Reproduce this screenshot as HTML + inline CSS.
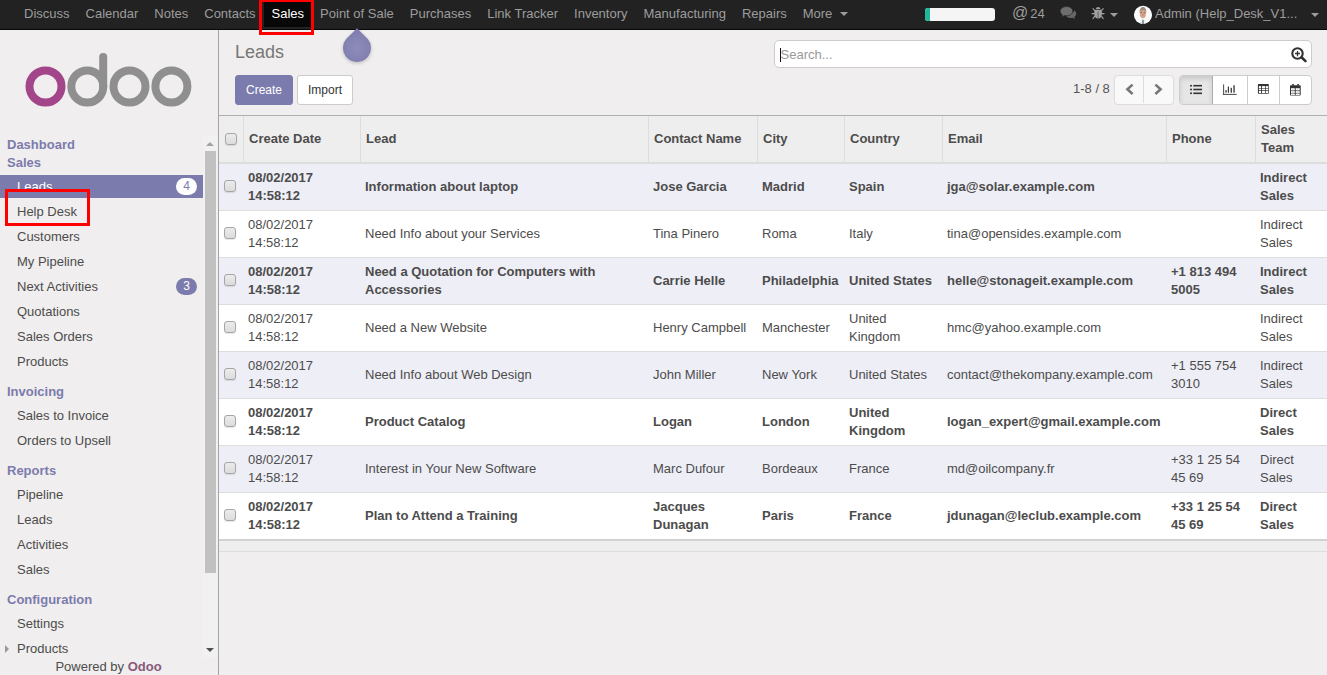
<!DOCTYPE html>
<html><head><meta charset="utf-8">
<style>
*{box-sizing:border-box;}
html,body{margin:0;padding:0;width:1327px;height:675px;overflow:hidden;}
body{font-family:"Liberation Sans",sans-serif;font-size:13px;color:#4c4c4c;background:#f0eeee;position:relative;}
#nav{position:absolute;left:0;top:0;width:1327px;height:30px;background:#222;border-bottom:1px solid #080808;}
#nav ul{list-style:none;margin:0;padding:0;position:absolute;left:16px;top:0;display:flex;}
#nav ul li a{display:block;padding:0 8px;height:29px;line-height:27px;color:#9d9d9d;text-decoration:none;white-space:nowrap;}
#nav ul li.active a{color:#fff;background:#080808;height:27px;}
.caret{display:inline-block;width:0;height:0;border-top:4px solid;border-left:4px solid transparent;border-right:4px solid transparent;vertical-align:middle;margin-left:4px;position:relative;top:-1px;}
.abs{position:absolute;}
#sidebar{position:absolute;left:0;top:30px;width:219px;height:645px;background:#f0eeee;border-right:1px solid #a3a3a8;}
#menu{position:absolute;left:0;top:0;width:203px;}
#menu .sec{color:#7c7bad;font-weight:bold;padding-left:7px;line-height:18px;height:29px;padding-top:8.5px;}
#menu .sec.first{height:auto;padding-top:0;}
#menu .it{height:25px;line-height:25px;padding-left:17px;position:relative;white-space:nowrap;}
#menu .it.active{color:#fff;}
#menu .it.active:before{content:"";position:absolute;left:0;right:0;top:1px;bottom:1px;background:#7c7bad;z-index:0;}
#menu .it span{position:relative;}
#menu .it span.badge{position:absolute;}
.badge{position:absolute;left:176px;top:4px;width:21px;height:17px;border-radius:9px;background:#7c7bad;color:#fff;font-size:12px;line-height:17px;text-align:center;}
.it.active .badge{background:#fff;color:#7c7bad;}
#cp{position:absolute;left:219px;top:30px;width:1108px;height:86px;border-bottom:1px solid #b0b0b0;}
.btn{position:absolute;height:30px;line-height:28px;font-size:12px;border:1px solid #ccc;border-radius:3px;text-align:center;background:#fff;color:#333;}
.btn-primary{background:#7c7bad;border-color:#7c7bad;color:#fff;}
#list{position:absolute;left:219px;top:116px;}
table{border-collapse:collapse;table-layout:fixed;width:1108px;}
th{background:#eee;font-weight:bold;text-align:left;vertical-align:middle;padding:5px 5px 5px 5.5px;line-height:18px;height:46px;border-left:1px solid #ddd;border-bottom:2px solid #ddd;}
th:first-child{border-left:0;}
th .cb{margin-left:0;top:-0.5px;}
td{padding:5px 5px 5px 5px;line-height:18px;height:47px;vertical-align:middle;border-top:1px solid #ddd;}
tbody tr:first-child td{border-top:0;height:46px;}
tbody tr:nth-child(odd){background:#eeeef6;}
tbody tr:nth-child(even){background:#fff;}
tr.b td{font-weight:bold;}
.cb{display:block;width:12px;height:12px;border:1px solid #a6a6a6;border-radius:3px;background:linear-gradient(#ececec,#dcdcdc);margin-left:0;position:relative;top:-1px;box-shadow:0 1px 1px rgba(0,0,0,.1);}
tfoot td{height:11px;padding:0;background:#eee;border-top:2px solid #d2d2d2;border-bottom:1px solid #ddd;}
.redbox{position:absolute;border:3px solid #f00;}
</style></head><body>
<div id="nav">
  <ul>
    <li><a>Discuss</a></li>
    <li><a>Calendar</a></li>
    <li><a>Notes</a></li>
    <li><a>Contacts</a></li>
    <li class="active"><a>Sales</a></li>
    <li><a>Point of Sale</a></li>
    <li><a>Purchases</a></li>
    <li><a>Link Tracker</a></li>
    <li><a>Inventory</a></li>
    <li><a>Manufacturing</a></li>
    <li><a>Repairs</a></li>
    <li><a>More <span class="caret"></span></a></li>
  </ul>
  <!-- right side -->
  <div class="abs" style="left:925px;top:8px;width:70px;height:13px;border-radius:3px;background:#f5f5f5;overflow:hidden;"><div style="width:5px;height:13px;background:#21b799;"></div></div>
  <div class="abs" style="left:1012px;top:-1px;height:29px;line-height:27px;color:#9d9d9d;font-size:16px;">@</div><div class="abs" style="left:1030.2px;top:0;height:29px;line-height:27px;color:#9d9d9d;">24</div>
  <svg class="abs" style="left:1058px;top:4px" width="20" height="17" viewBox="1058 4 20 17">
    <path d="M1068.6 13.6 C1071.2 13.6 1073.6 12.4 1074.6 10.6 C1075.6 11.4 1076.2 12.5 1076.2 13.7 C1076.2 15 1075.5 16.1 1074.4 16.9 L1075 19 L1072.6 17.8 C1071.9 18 1071.2 18.1 1070.5 18.1 C1068.6 18.1 1067 17.3 1066.2 16.1 C1067 16 1067.8 15.8 1068.6 13.6 Z" fill="#666"/>
    <path d="M1066.5 6.6 C1070 6.6 1072.8 8.6 1072.8 11.2 C1072.8 13.8 1070 15.8 1066.5 15.8 C1065.9 15.8 1065.3 15.7 1064.7 15.6 L1061.6 17 L1062.4 14.8 C1061 14 1060.2 12.7 1060.2 11.2 C1060.2 8.6 1063 6.6 1066.5 6.6 Z" fill="#6e6e6e" stroke="#222" stroke-width="0.6"/>
  </svg>
  <svg class="abs" style="left:1091px;top:6px" width="14" height="14" viewBox="0 0 14 14">
    <path d="M4.9 3.1 C4.9 1.8 5.9 1 7.1 1 C8.3 1 9.3 1.8 9.3 3.1 Z" fill="#a0a0a0"/>
    <path d="M3.8 3.8 L10.4 3.8 C10.8 4.6 11 5.8 11 7.6 C11 10.6 9.4 12.6 7.1 12.6 C4.8 12.6 3.2 10.6 3.2 7.6 C3.2 5.8 3.4 4.6 3.8 3.8 Z" fill="#a0a0a0"/>
    <rect x="6.5" y="5.6" width="1.2" height="6.2" fill="#6a6a6a"/>
    <path d="M3.7 4.6 L2 2.6 M10.5 4.6 L12.2 2.6 M3.2 7.6 L1.1 7.6 M11 7.6 L13.1 7.6 M3.6 10.4 L2 12.6 M10.6 10.4 L12.2 12.6" stroke="#a0a0a0" stroke-width="1.1" stroke-linecap="round"/>
  </svg>
  <div class="abs" style="left:1110px;top:13px;width:0;height:0;border-top:4.5px solid #9d9d9d;border-left:4px solid transparent;border-right:4px solid transparent;"></div>
  <svg class="abs" style="left:1133px;top:5px" width="20" height="20" viewBox="0 0 20 20">
    <defs><clipPath id="av"><circle cx="10" cy="9.85" r="9.1"/></clipPath></defs>
    <circle cx="10" cy="9.85" r="9.1" fill="#fbfbfb"/>
    <g clip-path="url(#av)">
      <path d="M6.5 19.5 L8.2 14.6 L11.8 14.6 L13.5 19.5 Z" fill="#eceff3"/>
      <ellipse cx="9.9" cy="8.8" rx="3.1" ry="4.4" fill="#d4a48c"/>
      <path d="M7.6 7.6 H9 M10.8 7.6 H12.2" stroke="#7a5648" stroke-width="0.9"/>
      <path d="M9.9 9 V11" stroke="#b98470" stroke-width="0.8"/>
      <path d="M6.6 8.4 C6.3 4.4 7.8 2 10 2 C12.2 2 13.6 4.4 13.3 8.4 C12.9 6.4 12.2 5 10 4.9 C7.8 5 7 6.4 6.6 8.4 Z" fill="#9b8b7c"/>
      <path d="M9.4 14.8 L10.6 14.8 L10.9 19 L9.1 19 Z" fill="#6f7787"/>
    </g>
  </svg>
  <div class="abs" style="left:1155px;top:0;height:29px;line-height:27px;color:#9d9d9d;white-space:nowrap;">Admin (Help_Desk_V1...</div>
  <div class="abs" style="left:1311px;top:13px;width:0;height:0;border-top:4.5px solid #9d9d9d;border-left:4px solid transparent;border-right:4px solid transparent;"></div>
</div>

<div id="sidebar">
  <svg class="abs" style="left:0;top:0" width="218" height="90" viewBox="0 30 218 90">
    <circle cx="45.5" cy="86.5" r="16" fill="none" stroke="#a24689" stroke-width="8"/>
    <circle cx="87.3" cy="86.5" r="16" fill="none" stroke="#8f8f8f" stroke-width="8"/>
    <line x1="103.2" y1="57" x2="103.2" y2="87" stroke="#8f8f8f" stroke-width="8" stroke-linecap="round"/>
    <circle cx="129.5" cy="86.5" r="16" fill="none" stroke="#8f8f8f" stroke-width="8"/>
    <circle cx="171.4" cy="86.5" r="16" fill="none" stroke="#8f8f8f" stroke-width="8"/>
  </svg>
  <div id="menu" style="top:105.5px">
    <div class="sec first">Dashboard</div>
    <div class="sec first" style="height:20.5px">Sales</div>
    <div class="it active"><span>Leads</span><span class="badge">4</span></div>
    <div class="it"><span>Help Desk</span></div>
    <div class="it"><span>Customers</span></div>
    <div class="it"><span>My Pipeline</span></div>
    <div class="it"><span>Next Activities</span><span class="badge">3</span></div>
    <div class="it"><span>Quotations</span></div>
    <div class="it"><span>Sales Orders</span></div>
    <div class="it"><span>Products</span></div>
    <div class="sec">Invoicing</div>
    <div class="it"><span>Sales to Invoice</span></div>
    <div class="it"><span>Orders to Upsell</span></div>
    <div class="sec">Reports</div>
    <div class="it"><span>Pipeline</span></div>
    <div class="it"><span>Leads</span></div>
    <div class="it"><span>Activities</span></div>
    <div class="it"><span>Sales</span></div>
    <div class="sec">Configuration</div>
    <div class="it"><span>Settings</span></div>
    <div class="it"><span>Products</span></div>
  </div>
  <!-- scrollbar -->
  <div class="abs" style="left:203px;top:106px;width:15px;height:522px;background:#f1f1f1;"></div>
  <div class="abs" style="left:205px;top:121px;width:11px;height:422px;background:#c1c1c1;"></div>
  <div class="abs" style="left:206px;top:112px;width:0;height:0;border-left:4px solid transparent;border-right:4px solid transparent;border-bottom:4px solid #a3a3a3;"></div>
  <div class="abs" style="left:206px;top:618px;width:0;height:0;border-left:4px solid transparent;border-right:4px solid transparent;border-top:4px solid #505050;"></div>
  <div class="abs" style="left:5px;top:615px;width:0;height:0;border-top:4px solid transparent;border-bottom:4px solid transparent;border-left:4px solid #999;"></div>
  <div class="abs" style="left:0;top:628px;width:203px;height:17px;background:#f0eeee;"></div>
  <div class="abs" style="left:-0.5px;top:628px;width:218px;text-align:center;line-height:17px;">Powered by <b style="color:#875a7b">Odoo</b></div>
</div>

<div id="cp">
  <div class="abs" style="left:16px;top:10px;font-size:18px;color:#777;line-height:24px;">Leads</div>
  <div class="btn btn-primary" style="left:16px;top:45px;width:58px;">Create</div>
  <div class="btn" style="left:78px;top:45px;width:56px;">Import</div>

  <div class="abs" style="left:555px;top:10px;width:538px;height:28px;border:1px solid #ccc;border-radius:5px;background:#fff;"></div>
  
  <div class="abs" style="left:561.5px;top:11px;height:28px;line-height:28px;color:#999;">Search...</div>
  <div class="abs" style="left:561px;top:18px;width:1px;height:14px;background:#111;"></div>
  <svg class="abs" style="left:1066px;top:13px" width="24" height="24" viewBox="1285 43 24 24">
    <circle cx="1297.5" cy="53.5" r="5.2" fill="none" stroke="#333" stroke-width="2.1"/>
    <path d="M1295 53.5 H1300 M1297.5 51 V56.2" stroke="#333" stroke-width="1.3"/>
    <path d="M1301.8 57.5 L1305.5 61.2" stroke="#333" stroke-width="2.6" stroke-linecap="round"/>
  </svg>
  <div class="abs" style="left:854px;top:44px;height:30px;line-height:30px;color:#555;white-space:nowrap;">1-8 / 8</div>
  <div class="abs" style="left:895px;top:45px;width:60px;height:30px;border:1px solid #ddd;border-radius:4px;background:#f9f9f9;"></div>
  <div class="abs" style="left:924px;top:46px;width:1px;height:27px;background:#ddd;"></div>
  <svg class="abs" style="left:895px;top:45px" width="59" height="30" viewBox="1114 75 59 30">
    <path d="M1132.6 84.6 L1127.4 89.3 L1132.6 94" fill="none" stroke="#777" stroke-width="2.6"/>
    <path d="M1155.4 84.6 L1160.6 89.3 L1155.4 94" fill="none" stroke="#777" stroke-width="2.6"/>
  </svg>
  <div class="abs" style="left:960px;top:45px;width:133px;height:30px;border:1px solid #ccc;border-radius:4px;background:#fff;overflow:hidden;">
    <div class="abs" style="left:0;top:0;width:33px;height:28px;background:#e6e6e6;box-shadow:inset 0 3px 5px rgba(0,0,0,.125);border-right:1px solid #adadad;"></div>
    <div class="abs" style="left:67px;top:0;width:1px;height:28px;background:#ccc;"></div>
    <div class="abs" style="left:99px;top:0;width:1px;height:28px;background:#ccc;"></div>
  </div>
  <svg class="abs" style="left:960px;top:45px" width="133" height="30" viewBox="1179 75 133 30">
    <g fill="#333">
      <circle cx="1191" cy="85.7" r="1"/><circle cx="1191" cy="89.5" r="1"/><circle cx="1191" cy="93.3" r="1"/>
      <rect x="1193.3" y="84.9" width="8.7" height="1.6"/><rect x="1193.3" y="88.7" width="8.7" height="1.6"/><rect x="1193.3" y="92.5" width="8.7" height="1.6"/>
    </g>
    <g fill="#333">
      <rect x="1223.2" y="84.4" width="0.9" height="10.3"/><rect x="1223.2" y="93.9" width="13.4" height="0.9"/>
      <rect x="1225.4" y="90" width="1.2" height="2.7"/><rect x="1227.8" y="86.6" width="1.2" height="6.1"/><rect x="1230.6" y="87.8" width="1.3" height="4.9"/><rect x="1233.4" y="85.2" width="1.3" height="7.5"/>
    </g>
    <g>
      <rect x="1257.9" y="84.1" width="10.9" height="9.7" rx="0.7" fill="#333"/>
      <g fill="#fff">
        <rect x="1258.9" y="86.1" width="2.2" height="2.3"/><rect x="1262" y="86.1" width="3.2" height="2.3"/><rect x="1265.9" y="86.1" width="2.2" height="2.3"/>
        <rect x="1258.9" y="89" width="2.2" height="1.2"/><rect x="1262" y="89" width="3.2" height="1.2"/><rect x="1265.9" y="89" width="2.2" height="1.2"/>
        <rect x="1258.9" y="90.9" width="2.2" height="2.2"/><rect x="1262" y="90.9" width="3.2" height="2.2"/><rect x="1265.9" y="90.9" width="2.2" height="2.2"/>
      </g>
    </g>
    <g>
      <rect x="1290" y="85.2" width="10.7" height="10.4" rx="0.8" fill="#333"/>
      <g fill="#fff">
        <rect x="1291" y="88.2" width="3.8" height="2.2"/><rect x="1295.7" y="88.2" width="4" height="2.2"/>
        <rect x="1291" y="91.1" width="3.8" height="1.8"/><rect x="1295.7" y="91.1" width="4" height="1.8"/>
        <rect x="1291" y="93.5" width="3.8" height="1.5"/><rect x="1295.7" y="93.5" width="4" height="1.5"/>
      </g>
      <path d="M1292.9 88 V95 M1297.7 88 V95" stroke="#bbb" stroke-width="0.5"/>
      <rect x="1291.9" y="83.9" width="2.2" height="3" rx="1" fill="#333"/>
      <rect x="1297" y="83.9" width="2.2" height="3" rx="1" fill="#333"/>
      <circle cx="1293" cy="85.6" r="0.5" fill="#999"/><circle cx="1298.1" cy="85.6" r="0.5" fill="#999"/>
    </g>
  </svg>
</div>

<div id="list">
<table>
  <colgroup><col style="width:24px"><col style="width:117px"><col style="width:288px"><col style="width:109px"><col style="width:87px"><col style="width:98px"><col style="width:224px"><col style="width:89px"><col style="width:72px"></colgroup>
  <thead><tr><th><span class="cb"></span></th><th>Create Date</th><th>Lead</th><th>Contact Name</th><th>City</th><th>Country</th><th>Email</th><th>Phone</th><th>Sales Team</th></tr></thead>
  <tbody>
    <tr class="b"><td><span class="cb"></span></td><td>08/02/2017 14:58:12</td><td>Information about laptop</td><td>Jose Garcia</td><td>Madrid</td><td>Spain</td><td>jga@solar.example.com</td><td></td><td>Indirect Sales</td></tr>
    <tr><td><span class="cb"></span></td><td>08/02/2017 14:58:12</td><td>Need Info about your Services</td><td>Tina Pinero</td><td>Roma</td><td>Italy</td><td>tina@opensides.example.com</td><td></td><td>Indirect Sales</td></tr>
    <tr class="b"><td><span class="cb"></span></td><td>08/02/2017 14:58:12</td><td>Need a Quotation for Computers with Accessories</td><td>Carrie Helle</td><td>Philadelphia</td><td>United States</td><td>helle@stonageit.example.com</td><td>+1 813 494 5005</td><td>Indirect Sales</td></tr>
    <tr><td><span class="cb"></span></td><td>08/02/2017 14:58:12</td><td>Need a New Website</td><td>Henry Campbell</td><td>Manchester</td><td>United Kingdom</td><td>hmc@yahoo.example.com</td><td></td><td>Indirect Sales</td></tr>
    <tr><td><span class="cb"></span></td><td>08/02/2017 14:58:12</td><td>Need Info about Web Design</td><td>John Miller</td><td>New York</td><td>United States</td><td>contact@thekompany.example.com</td><td>+1 555 754 3010</td><td>Indirect Sales</td></tr>
    <tr class="b"><td><span class="cb"></span></td><td>08/02/2017 14:58:12</td><td>Product Catalog</td><td>Logan</td><td>London</td><td>United Kingdom</td><td>logan_expert@gmail.example.com</td><td></td><td>Direct Sales</td></tr>
    <tr><td><span class="cb"></span></td><td>08/02/2017 14:58:12</td><td>Interest in Your New Software</td><td>Marc Dufour</td><td>Bordeaux</td><td>France</td><td>md@oilcompany.fr</td><td>+33 1 25 54 45 69</td><td>Direct Sales</td></tr>
    <tr class="b"><td><span class="cb"></span></td><td>08/02/2017 14:58:12</td><td>Plan to Attend a Training</td><td>Jacques Dunagan</td><td>Paris</td><td>France</td><td>jdunagan@leclub.example.com</td><td>+33 1 25 54 45 69</td><td>Direct Sales</td></tr>
  </tbody>
  <tfoot><tr><td></td><td></td><td></td><td></td><td></td><td></td><td></td><td></td><td></td></tr></tfoot>
</table>
</div>


<div class="abs" style="left:343px;top:34px;width:28px;height:28px;border-radius:0 50% 50% 50%;transform:rotate(45deg);background:radial-gradient(circle at 50% 50%, #8d8cba 0%, #7c7bad 100%);box-shadow:1px 1px 4px rgba(0,0,0,.2);"></div>
<div class="redbox" style="left:259px;top:-1px;width:55px;height:36px;"></div>
<div class="redbox" style="left:5px;top:189px;width:85px;height:37px;"></div>
</body></html>
